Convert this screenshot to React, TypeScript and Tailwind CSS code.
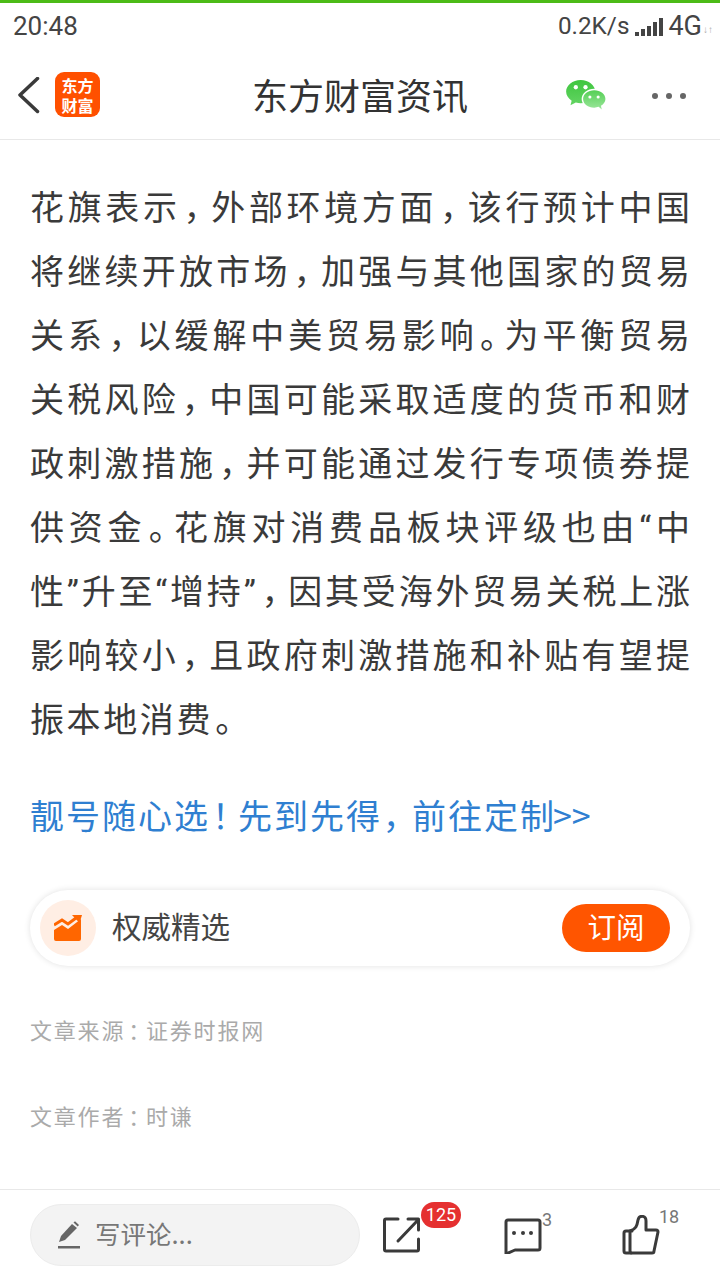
import React from 'react';

const lines = [
  '花旗表示，外部环境方面，该行预计中国',
  '将继续开放市场，加强与其他国家的贸易',
  '关系，以缓解中美贸易影响。为平衡贸易',
  '关税风险，中国可能采取适度的货币和财',
  '政刺激措施，并可能通过发行专项债券提',
  '供资金。花旗对消费品板块评级也由“中',
  '性”升至“增持”，因其受海外贸易关税上涨',
  '影响较小，且政府刺激措施和补贴有望提',
];

const cjk = { fontFamily: '"Noto Sans CJK SC", "Noto Sans", sans-serif' };

// curly quotes are narrow in the reference, commas and stops a bit narrower than a full cell
const withPunct = (s: string) =>
  s.split(/([“”，。])/).map((part, i) => {
    if (part === '“' || part === '”') {
      return <span key={i} className="font-['Roboto']">{part}</span>;
    }
    if (part === '，') {
      return <span key={i} className="[font-feature-settings:'palt'] ml-[5px] mr-[5px]">{part}</span>;
    }
    if (part === '。') {
      return <span key={i} className="[font-feature-settings:'palt'] ml-[2px] mr-[4px]">{part}</span>;
    }
    return part;
  });

const SignalIcon = () => (
  <svg width="28" height="20" viewBox="0 0 28 20" fill="#444">
    <rect x="0" y="15" width="4" height="4" />
    <rect x="6" y="12" width="4" height="7" />
    <rect x="12" y="9" width="4" height="10" />
    <rect x="18" y="5" width="4" height="14" />
    <rect x="24" y="1" width="4" height="18" />
  </svg>
);

const WechatIcon = () => (
  <svg width="41" height="33" viewBox="0 0 42 34">
    <defs>
      <linearGradient id="wa" x1="0" y1="0" x2="0" y2="1">
        <stop offset="0" stopColor="#3fc63f" />
        <stop offset="1" stopColor="#63d463" />
      </linearGradient>
      <linearGradient id="wb" x1="0" y1="0" x2="0" y2="1">
        <stop offset="0" stopColor="#55cf55" />
        <stop offset="1" stopColor="#9be69b" />
      </linearGradient>
    </defs>
    <path d="M15 1C6.700 1 0 6.500 0 13c0 3.800 2.200 7 5.700 9.300L4.500 27l5.500-2.700c1.600.4 3.300.7 5 .7 8.300 0 15-5.500 15-12S23.300 1 15 1z" fill="url(#wa)" />
    <path d="M29 10c-7 0-13 4.800-13 10.500S22 31 29 31c1.600 0 3.200-.3 4.600-.7l3.900 3.200-.9-4.400C39.800 27.200 42 24 42 20.500 42 14.800 36 10 29 10z" fill="#fff" />
    <path d="M29 11.500c-6.300 0-11.500 4-11.500 9s5.200 9 11.500 9c1.600 0 3.100-.3 4.500-.8l3.200 2.800-.8-3.900c2.800-1.700 4.600-4.400 4.600-7.100 0-5-5.200-9-11.500-9z" fill="url(#wb)" />
    <circle cx="10" cy="8.500" r="2.200" fill="#fff" />
    <circle cx="20" cy="8.500" r="2.200" fill="#fff" />
    <circle cx="24.500" cy="18.500" r="1.600" fill="#fff" />
    <circle cx="33" cy="18.500" r="1.600" fill="#fff" />
  </svg>
);

export default function App() {
  return (
    <div className="w-[720px] h-[1280px] bg-white flex flex-col overflow-hidden" style={cjk}>
      <div className="h-[3px] bg-[#4cbb17]" />

      {/* status bar */}
      <div className="h-[49px] flex items-center justify-between pl-[13px] pr-[7px] text-[#444] font-['Roboto'] pb-[2px]">
        <span className="text-[26px]">20:48</span>
        <div className="flex items-center text-[24.300px]">
          <span>0.2K/s</span>
          <span className="ml-[6px]"><SignalIcon /></span>
          <span className="ml-[5px] text-[27px] leading-none">4G</span>
          <span className="text-[10px] text-[#aaa] ml-[1px] mt-[6px]">↓↑</span>
        </div>
      </div>

      {/* header */}
      <div className="h-[88px] grid grid-cols-[1fr_auto_1fr] items-center border-b border-[#e8e8e8] pl-[18px] pr-[34px]">
        <div className="flex items-center">
          <svg width="24" height="38" viewBox="0 0 24 38" fill="none" stroke="#3a3a3a" strokeWidth="3.500" strokeLinecap="round" strokeLinejoin="round">
            <path d="M19.500 1.500 2 18l17.500 16.500" />
          </svg>
          <div className="ml-[13px] -mt-[2px] w-[45px] h-[45px] rounded-[9px] bg-[#ff5000] flex flex-col items-center justify-center text-white text-[16px] leading-[20px] font-bold">
            <span>东方</span>
            <span>财富</span>
          </div>
        </div>
        <div className="text-[36px] leading-[44px] text-[#333] pb-[3px] pl-[17px] pr-[1px]">东方财富资讯</div>
        <div className="flex items-center justify-end">
          <WechatIcon />
          <div className="ml-[45px] flex gap-[8px]">
            <span className="w-[6px] h-[6px] rounded-full bg-[#666]" />
            <span className="w-[6px] h-[6px] rounded-full bg-[#666]" />
            <span className="w-[6px] h-[6px] rounded-full bg-[#666]" />
          </div>
        </div>
      </div>

      {/* article */}
      <div className="flex-1 px-[30px] pt-[34px]">
        <div className="text-[34px] leading-[64px] text-[#3a3a3a]">
          {lines.map((l) => (
            <p key={l} className="h-[64px] [text-align-last:justify] [text-justify:inter-character] whitespace-nowrap">{withPunct(l)}</p>
          ))}
          <p className="h-[64px] tracking-[2.600px]">振本地消费{withPunct('。')}</p>
        </div>

        <p className="mt-[33px] h-[64px] text-[34px] leading-[64px] text-[#2f7fd1] tracking-[2px] whitespace-nowrap">
          靓号随心选<span className="[font-feature-settings:'palt'] ml-[2px] mr-[7px]">！</span>先到先得<span className="[font-feature-settings:'palt'] ml-[3px] mr-[8px]">，</span>前往定制<span className="tracking-normal -ml-[3px]">&gt;&gt;</span>
        </p>

        <div className="mt-[43px] h-[76px] rounded-full bg-white shadow-[0_0_6px_rgba(0,0,0,0.12)] flex items-center pl-[10px] pr-[20px]">
          <div className="w-[56px] h-[56px] rounded-full bg-[#ffeee4] flex items-center justify-center">
            <svg width="28" height="26" viewBox="0 0 28 26">
              <path d="M0 15 8 10l6 4 13-10v20a2 2 0 0 1-2 2H2a2 2 0 0 1-2-2z" fill="#ff6600" />
              <path d="M0 10 8 5l6 4 8-6" fill="none" stroke="#ff6600" strokeWidth="3" />
              <path d="M18 0h10l-2.500 8z" fill="#ff6600" />
            </svg>
          </div>
          <span className="ml-[16px] text-[29.500px] text-[#444] flex-1 pb-[6px]">权威精选</span>
          <button className="w-[108px] h-[48px] rounded-full bg-[#ff5500] text-white text-[28.500px] pb-[3px]">订阅</button>
        </div>

        <p className="mt-[46px] text-[22px] tracking-[1.800px] leading-[34px] text-[#aaa]">文章来源<span className="[font-feature-settings:'palt'] ml-[3px] mr-[5px]">：</span>证券时报网</p>
        <p className="mt-[52px] text-[22px] tracking-[1.800px] leading-[34px] text-[#aaa]">文章作者<span className="[font-feature-settings:'palt'] ml-[3px] mr-[5px]">：</span>时谦</p>
      </div>

      {/* bottom bar */}
      <div className="h-[91px] border-t border-[#e8e8e8] flex items-center pl-[30px]">
        <div className="w-[330px] h-[62px] rounded-full bg-[#f3f3f3] border border-[#ececec] flex items-center pl-[27px]">
          <svg width="22" height="28" viewBox="0 0 22 28" fill="#666">
            <path d="M1 21l2-6L14 3l5 4L7 19z" />
            <path d="M15.500 1.500l1.500-1.200 4 3.700-1.300 1.500z" />
            <rect x="0" y="25" width="22" height="2.500" />
          </svg>
          <span className="ml-[15px] text-[25.500px] text-[#777] pb-[3px]">写评论...</span>
        </div>

        <div className="relative ml-[23px] w-[38px] h-[36px]">
          <svg width="38" height="36" viewBox="0 0 38 36" fill="none" stroke="#3a3a3a" strokeWidth="3" strokeLinecap="round" strokeLinejoin="round">
            <path d="M15 2H3a1.500 1.500 0 0 0-1.500 1.500v29A1.500 1.500 0 0 0 3 34h31a1.500 1.500 0 0 0 1.500-1.500V22" />
            <path d="M25 2h10.500v11M35 3 15 24" />
          </svg>
          <span className="absolute left-[38px] -top-[15px] w-[40px] h-[26px] text-center rounded-full bg-[#e53030] text-white text-[18px] leading-[26px] font-['Roboto']">125</span>
        </div>

        <div className="relative ml-[83px] w-[38px] h-[36px] mt-[2px]">
          <svg width="38" height="36" viewBox="0 0 38 36" fill="none" stroke="#3a3a3a" strokeWidth="3" strokeLinejoin="round">
            <path d="M2 4a2 2 0 0 1 2-2h30a2 2 0 0 1 2 2v26a2 2 0 0 1-2 2H11l-9 4z" />
            <circle cx="10" cy="15" r="2" fill="#3a3a3a" stroke="none" />
            <circle cx="19" cy="15" r="2" fill="#3a3a3a" stroke="none" />
            <circle cx="27" cy="15" r="2" fill="#3a3a3a" stroke="none" />
          </svg>
          <span className="absolute left-[38px] -top-[9px] text-[18px] leading-[22px] text-[#777] font-['Roboto']">3</span>
        </div>

        <div className="relative ml-[80px] w-[38px] h-[40px]">
          <svg width="38" height="40" viewBox="0 0 38 40" fill="none" stroke="#3a3a3a" strokeWidth="3" strokeLinecap="round" strokeLinejoin="round">
            <path d="M10 16h-6a2 2 0 0 0-2 2v18a2 2 0 0 0 2 2h5" />
            <path d="M8 16v20a2 2 0 0 0 2 2h20a2 2 0 0 0 2-2l4-19a2 2 0 0 0-2-2H24V6c0-6-7-6-8-1-1 6-2 9-8 11z" />
          </svg>
          <span className="absolute left-[37px] -top-[9px] text-[18px] leading-[22px] text-[#777] font-['Roboto']">18</span>
        </div>
      </div>
    </div>
  );
}
